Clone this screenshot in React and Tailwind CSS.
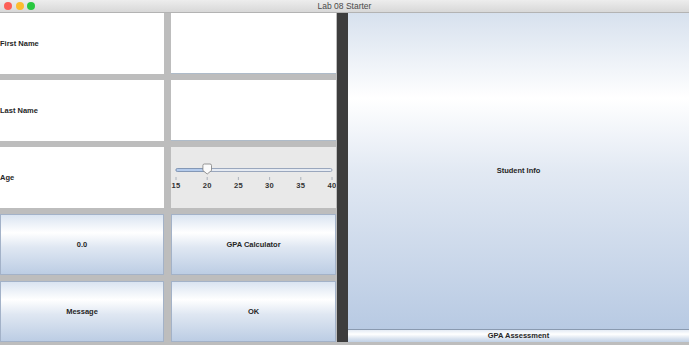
import React from "react";

const font = { fontFamily: '"Liberation Sans", Arial, sans-serif' };

function AquaButton({ label, className = "" }) {
  return (
    <div
      className={`flex items-center justify-center border border-[#a3b2c8] bg-[linear-gradient(to_bottom,#dae4f1_0%,#ffffff_30%,#dfe7f2_55%,#bccde4_100%)] pt-[1px] text-[7.5px] font-bold text-[#262626] ${className}`}
    >
      {label}
    </div>
  );
}

function Slider() {
  const x0 = 5;
  const step = 31.2;
  const vals = [15, 20, 25, 30, 35, 40];
  const tx = x0 + step; // value 20
  return (
    <svg width="165" height="61" viewBox="0 0 165 61">
      <rect x="5" y="21.5" width="156" height="3" rx="1.5" fill="#e6ebf3" stroke="#8696b0" strokeWidth="0.8" />
      <rect x="5" y="21.5" width={tx - 5} height="3" rx="1.5" fill="#b4cbec" stroke="#7b8fae" strokeWidth="0.8" />
      {vals.map((v, i) => (
        <g key={v}>
          <line x1={x0 + i * step} x2={x0 + i * step} y1="30" y2="33" stroke="#9aa3b0" strokeWidth="0.8" />
          <text
            x={x0 + i * step}
            y="40.5"
            textAnchor="middle"
            fontSize="7.6"
            fontWeight="600"
            fill="#333"
            letterSpacing="0.3"
            style={font}
          >
            {v}
          </text>
        </g>
      ))}
      <path
        d={`M${tx - 4.3} 18.5 Q${tx - 4.3} 17 ${tx - 2.8} 17 L${tx + 2.8} 17 Q${tx + 4.3} 17 ${tx + 4.3} 18.5 L${tx + 4.3} 23.5 L${tx} 27 L${tx - 4.3} 23.5 Z`}
        fill="#fbfbfb"
        stroke="#7d7d7d"
        strokeWidth="0.8"
      />
    </svg>
  );
}

export default function App() {
  return (
    <div className="flex h-[345px] w-[689px] flex-col overflow-hidden bg-[#bdbdbd]" style={font}>
      {/* title bar */}
      <div className="relative flex h-[13px] shrink-0 items-center justify-center border-b border-[#b3b3b3] bg-[linear-gradient(to_bottom,#ededed,#d8d8d8)]">
        <div className="absolute left-[4px] top-[2px] flex gap-[3.5px]">
          <div className="h-[8px] w-[8px] rounded-full bg-[#fc5f57]" />
          <div className="h-[8px] w-[8px] rounded-full bg-[#fdbc2e]" />
          <div className="h-[8px] w-[8px] rounded-full bg-[#29c840]" />
        </div>
        <span className="text-[8.5px] leading-none text-[#4a4a4a]">Lab 08 Starter</span>
      </div>

      <div className="flex h-[329px] shrink-0">
        {/* left grid */}
        <div className="grid w-[337px] grid-cols-[164px_165px] grid-rows-5 gap-x-[7px] gap-y-[6px] pr-[1px]">
          <div className="flex items-center bg-white pt-[1px] text-[7.5px] font-bold text-[#262626]">First Name</div>
          <div className="border-b border-[#aebbc9] bg-white" />
          <div className="flex items-center bg-white pt-[1px] text-[7.5px] font-bold text-[#262626]">Last Name</div>
          <div className="border-b border-[#aebbc9] bg-white" />
          <div className="flex items-center bg-white pt-[1px] text-[7.5px] font-bold text-[#262626]">Age</div>
          <div className="bg-[#e9e9e9]">
            <Slider />
          </div>
          <AquaButton label="0.0" />
          <AquaButton label="GPA Calculator" />
          <AquaButton label="Message" />
          <AquaButton label="OK" />
        </div>

        {/* divider */}
        <div className="w-[11px] bg-[#3d3d3d]" />

        {/* right panel */}
        <div className="flex w-[341px] flex-col">
          <div className="flex flex-1 items-center justify-center bg-[linear-gradient(to_bottom,#d7e1ee_0%,#ffffff_27%,#e2e9f3_50%,#b8cae3_100%)] text-[7.5px] font-bold text-[#262626]">
            Student Info
          </div>
          <div className="flex h-[13px] items-center justify-center border-t border-[#8a9ab0] bg-[linear-gradient(to_bottom,#e4ebf4,#ffffff_35%,#dbe4f0_70%,#c0d0e5)] text-[7.5px] font-bold text-[#262626]">
            GPA Assessment
          </div>
        </div>
      </div>
    </div>
  );
}
